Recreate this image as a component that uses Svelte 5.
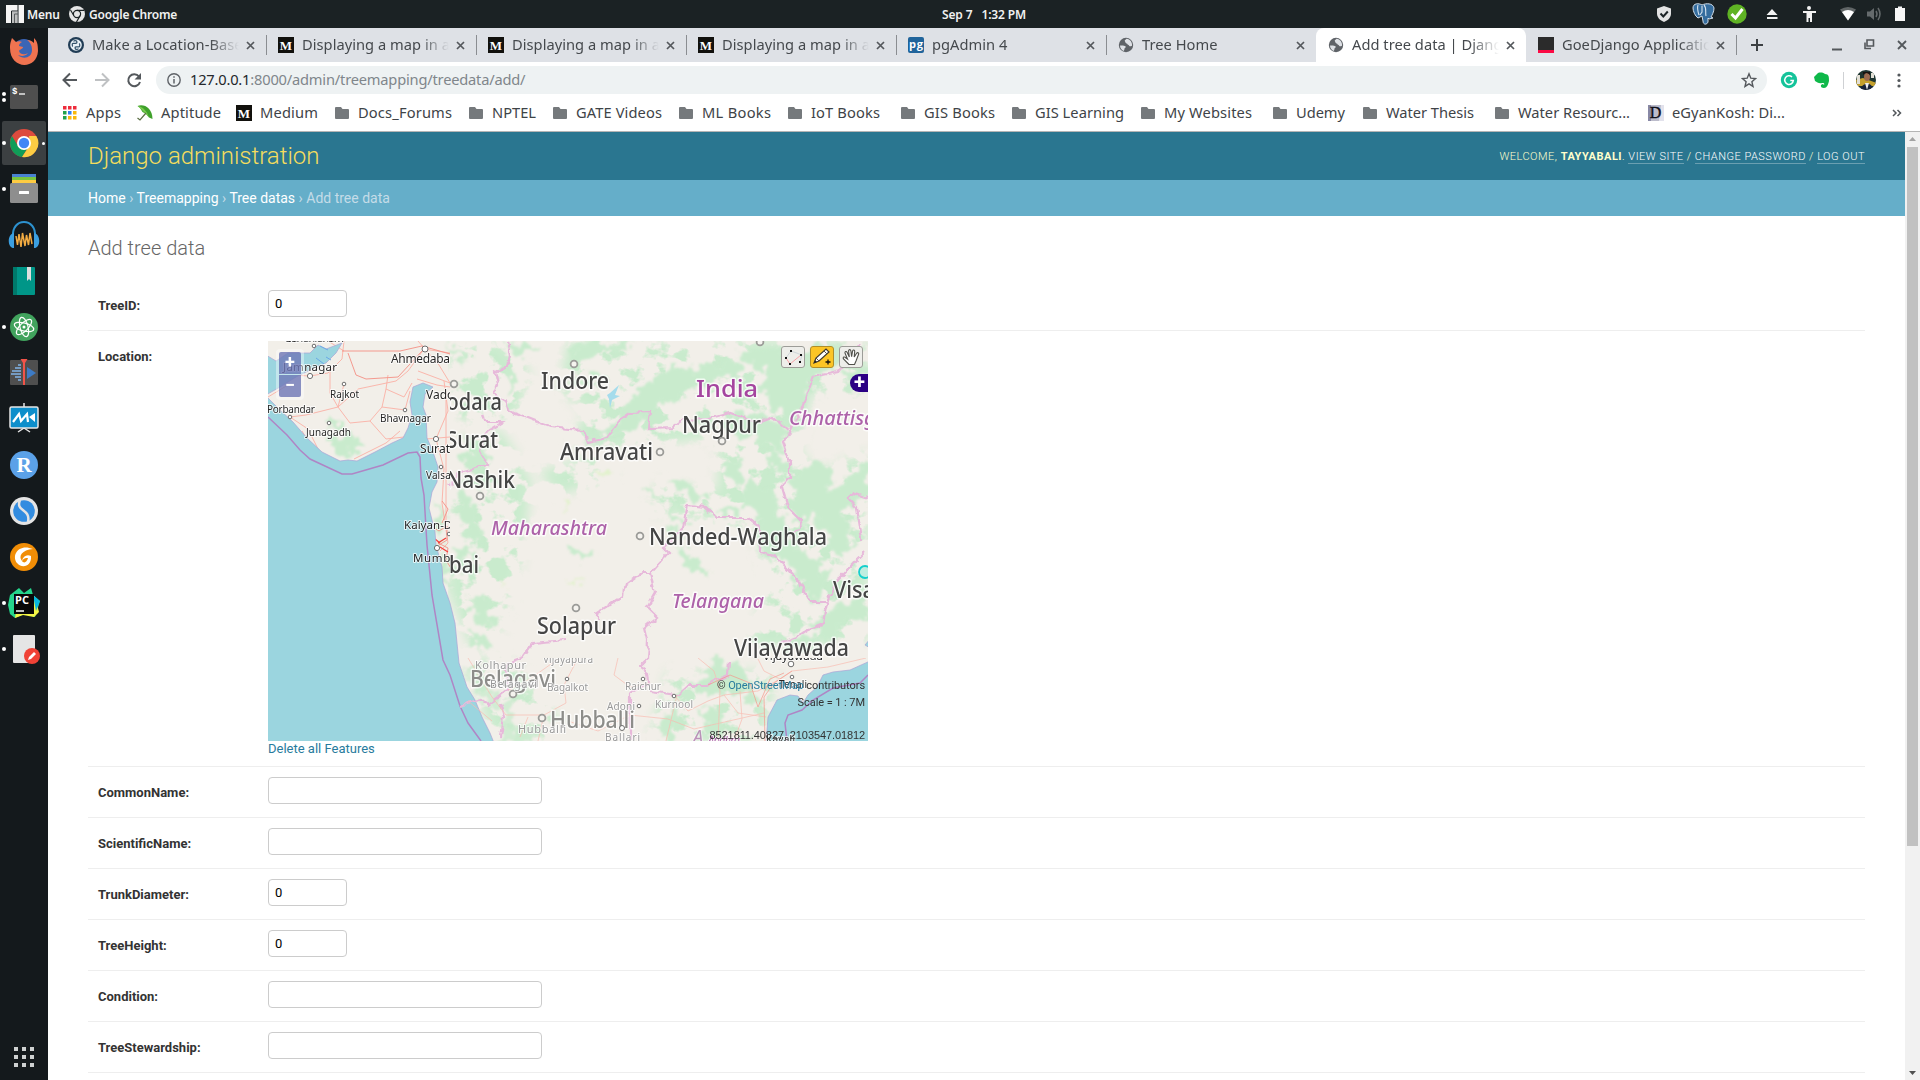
<script>
  const tabs = [
    { title: 'Make a Location-Based Web App', icon: 'python' },
    { title: 'Displaying a map in a Django', icon: 'medium' },
    { title: 'Displaying a map in a Django', icon: 'medium' },
    { title: 'Displaying a map in a Django', icon: 'medium' },
    { title: 'pgAdmin 4', icon: 'pg' },
    { title: 'Tree Home', icon: 'globe' },
    { title: 'Add tree data | Django site', icon: 'globe', active: true },
    { title: 'GoeDjango Application', icon: 'goe' }
  ];

  const bookmarks = [
    { label: 'Apps', icon: 'apps', w: 75, t: 35 },
    { label: 'Aptitude', icon: 'umbrella', w: 99, t: 60 },
    { label: 'Medium', icon: 'medium', w: 99, t: 58 },
    { label: 'Docs_Forums', icon: 'folder', w: 134, t: 94 },
    { label: 'NPTEL', icon: 'folder', w: 84, t: 44 },
    { label: 'GATE Videos', icon: 'folder', w: 126, t: 86 },
    { label: 'ML Books', icon: 'folder', w: 109, t: 69 },
    { label: 'IoT Books', icon: 'folder', w: 113, t: 69 },
    { label: 'GIS Books', icon: 'folder', w: 111, t: 71 },
    { label: 'GIS Learning', icon: 'folder', w: 129, t: 89 },
    { label: 'My Websites', icon: 'folder', w: 132, t: 88 },
    { label: 'Udemy', icon: 'folder', w: 90, t: 49 },
    { label: 'Water Thesis', icon: 'folder', w: 132, t: 88 },
    { label: 'Water Resourc...', icon: 'folder', w: 153, t: 112 },
    { label: 'eGyanKosh: Di...', icon: 'egyan', w: 140, t: 113 }
  ];

  const dock = [
    { id: 'firefox' },
    { id: 'terminal', dots: 2 },
    { id: 'chrome', dots: 1, active: true },
    { id: 'files', dots: 1 },
    { id: 'audacity' },
    { id: 'book' },
    { id: 'atom', dots: 1 },
    { id: 'cutter' },
    { id: 'board' },
    { id: 'rstudio' },
    { id: 'simplenote' },
    { id: 'foxit' },
    { id: 'pycharm', dots: 1 },
    { id: 'editor', dots: 1 }
  ];

  const fields = [
    { label: 'CommonName:', value: '' },
    { label: 'ScientificName:', value: '' },
    { label: 'TrunkDiameter:', value: '0', small: true },
    { label: 'TreeHeight:', value: '0', small: true },
    { label: 'Condition:', value: '' },
    { label: 'TreeStewardship:', value: '' }
  ];

  // Labels of the sharp tile: text, x, baseline, size, text length
  const sharp = [
    ['Gandhidham', 16, 1, 11, 60], ['Ahmedabad', 123, 22, 12, 66], ['Jamnagar', 15, 30, 11.5, 54],
    ['Rajkot', 62, 57, 10, 29], ['Vadodara', 158, 58, 12, 54], ['Porbandar', -1, 72, 10, 48],
    ['Bhavnagar', 112, 81, 10, 51], ['Junagadh', 38, 95, 10, 45], ['Surat', 152, 112, 12, 30],
    ['Valsad', 158, 138, 10, 31], ['Kalyan-Dombivli', 136, 188, 11.5, 88], ['Mumbai', 145, 221, 11.5, 48]
  ];
  // Labels of the enlarged tile
  const large = [
    ['Vadodara', 143, 69, 23, 91], ['Surat', 178, 107, 23, 52], ['Nashik', 178, 147, 23, 69],
    ['Indore', 273, 48, 23, 68], ['Nagpur', 414, 92, 23, 79], ['Amravati', 292, 119, 23, 93],
    ['Nanded-Waghala', 381, 204, 23, 178], ['Mumbai', 130, 232, 23, 81], ['Solapur', 269, 293, 23, 79],
    ['Visakhapatnam', 565, 257, 23, 160], ['Vijayawada', 466, 315, 23, 115]
  ];
  const faded = [
    ['Kolhapur', 207, 328, 11, 51], ['Vijayapura', 275, 322, 10, 50], ['Belagavi', 222, 347, 10.5, 47],
    ['Bagalkot', 279, 350, 10, 41], ['Raichur', 357, 349, 10, 36], ['Adoni', 339, 369, 10, 28],
    ['Kurnool', 387, 367, 10, 38], ['Hubballi', 250, 392, 11, 48], ['Ballari', 337, 400, 10, 35]
  ];
  const smallTowns = [[46, 5], [157, 8, 3], [42, 35, 2.6], [76, 43], [22, 76], [137, 69], [61, 82], [168, 98, 2.6], [173, 126], [169, 207, 2.6], [181, 193]];
  const bigTowns = [[186, 43], [212, 155], [306, 23], [392, 111], [454, 100], [372, 195], [308, 267], [492, 1], [245, 353], [274, 377]];
</script>

{#snippet fav(id)}
  {#if id === 'folder'}
    <svg class="fav folder" viewBox="0 0 14 14"><path d="M1 1h5l1.500 2H13a1 1 0 0 1 1 1v8a1 1 0 0 1-1 1H1a1 1 0 0 1-1-1V2a1 1 0 0 1 1-1z" fill="#75797c" /></svg>
  {:else}
    <svg class="fav" viewBox="0 0 16 16">
      {#if id === 'medium' || id === 'egyan'}
        <rect width="16" height="16" fill={id === 'medium' ? '#12110d' : '#bcbccb'} />
        {#if id === 'medium'}
          <text x="8" y="12.500" font-family="Liberation Serif" font-weight="bold" font-size="13" text-anchor="middle" fill="#fff">M</text>
        {:else}
          <path d="M0 0h3v16H0z" fill="#8888a6" /><path d="M13 0h3v16h-5z" fill="#e2e2ec" />
          <text x="7.500" y="13" font-family="Liberation Serif" font-size="16" text-anchor="middle" fill="#0d0d18" stroke="#0d0d18" stroke-width=".4">D</text>
        {/if}
      {:else if id === 'python'}
        <circle cx="8" cy="8" r="8" fill="#203c55" /><circle cx="8" cy="8" r="5.800" fill="#e9f2f7" />
        <path d="M5 6.300h3.700M5 6.300C4 6.300 4 9.200 5 9.400M8.800 6.200V4.600c0-1.200-3-1.200-3 0M11 9.800H7.300M11 9.800c1 0 1-3 0-3.300M7.200 9.800v1.600c0 1.200 3 1.200 3 0" fill="none" stroke="#35556d" stroke-width="1.300" />
      {:else if id === 'pg'}
        <rect width="16" height="16" rx="2" fill="#20649b" />
        <text x="8" y="11" font-family="Open Sans" font-weight="bold" font-size="11" text-anchor="middle" textLength="14" fill="#fff">pg</text>
      {:else if id === 'globe'}
        <circle cx="8" cy="8" r="7.200" fill="#5f6368" />
        <path d="M2 8.600c2 0 4.200-.3 5.700 1 .5 1-1.200 1.300-1.200 2.200 0 .9-.4 1.400-.9 2.200C3.400 12.800 2 11 2 8.600zM8.600 1.800c-1 1-2.400 1.200-1.700 2.500.8 1 .3 1.700 1.600 2.100 1.300.2.700 1.400 2.200 1.600.6 1.700 1.700 1.500 3.300.7.500-3.200-1.900-6.600-5.400-6.900z" fill="#dee1e6" />
      {:else if id === 'goe'}
        <rect width="16" height="16" fill="#2b2b2b" /><rect y="13" width="16" height="3" fill="#fb0a44" />
      {:else if id === 'apps'}
        <g transform="translate(1 1)">
          <path d="M0 0h3.500v3.500H0zM5 0h3.500v3.500H5zM10 0h3.500v3.500H10z" fill="#ee2c3c" />
          <path d="M0 5h3.500v3.500H0zM0 10h3.500v3.500H0z" fill="#1fa24c" /><path d="M5 5h3.500v3.500H5z" fill="#2f7ff0" />
          <path d="M10 5h3.500v3.500H10zM5 10h3.500v3.500H5zM10 10h3.500v3.500H10z" fill="#f9b90c" />
        </g>
      {:else if id === 'umbrella'}
        <path d="M.5 1C7-1.500 15.500 3 15.500 14l-3.500-1.500-3-3.500-3.500-2-2.500-4z" fill="#3fa12b" />
        <path d="M1 1c5 1 9 5 11 11.500L9 9z" fill="#78cb4e" /><path d="M9 8 3 15 .5 13" fill="none" stroke="#5a6d42" stroke-width="1.200" />
      {/if}
    </svg>
  {/if}
{/snippet}

{#snippet dockIcon(id)}
  <svg class="app" viewBox="0 0 32 32">
    {#if id === 'firefox'}
      <circle cx="16" cy="16" r="12" fill="#3b65b5" />
      <path d="M2 13C2 8 3 6 4 3l4 4c2-1 4-1 6 0-2 1-3 2-3 4l4 1c0 2-3 2-4 4 1 4 6 4 9 2-3 4-8 3-10 2 5 5 14 3 14-5 0-5-2-8-5-10 3 0 5 1 7 3l0-5c3 3 4 6 4 13-1 19-28 19-28-3z" fill="#ef7350" />
    {:else if id === 'terminal'}
      <rect x="2" y="4" width="28" height="24" rx="1.500" fill="#4f4f4f" />
      <text x="4" y="13" font-family="Liberation Mono" font-weight="bold" font-size="9" fill="#fff">$</text><path d="M11 13h6" stroke="#fff" stroke-width="1.300" />
    {:else if id === 'chrome'}
      <circle cx="16" cy="16" r="14" fill="#dd4b3e" />
      <path d="M4 9a14 14 0 0 0 10 21l7-11-5 3-6-3z" fill="#109d58" /><path d="M28.300 9A14 14 0 0 1 14 30l8-12-1-9z" fill="#fdcc43" />
      <circle cx="16" cy="16" r="7" fill="#fff" /><circle cx="16" cy="16" r="5.200" fill="#4086f5" />
    {:else if id === 'files'}
      <path d="M4 1h24v10H4z" fill="#4981d1" /><path d="M4 4h24v8H4z" fill="#7ac53f" /><path d="M4 7h24v8H4z" fill="#fecb42" />
      <rect x="2" y="10" width="28" height="20" rx="1.500" fill="#8e8e8e" /><rect x="11" y="18" width="10" height="3" rx=".5" fill="#fff" />
    {:else if id === 'audacity'}
      <path d="M5 18C3-2 29-2 27 18" fill="none" stroke="#2d92d0" stroke-width="2" />
      <path d="M6 14v15c-7 0-7-14 0-15zM26 14v15c7 0 7-14 0-15z" fill="#3c9fe0" />
      <path d="m8 17 1.500 9L11 15l2 13 1.500-14L17 27l1.500-11 2 10 1.500-12 2 11" fill="none" stroke="#f2ab42" stroke-width="1.500" />
    {:else if id === 'book'}
      <rect x="5" y="2" width="22" height="28" rx="1" fill="#009688" /><path d="M5 2h4v28H5z" fill="#00796b" /><path d="M19 2h4v14l-2-2-2 2z" fill="#dfdfdf" />
    {:else if id === 'atom'}
      <circle cx="16" cy="16" r="14" fill="#41a35d" />
      <g fill="none" stroke="#fff" stroke-width="1.200"><ellipse cx="16" cy="16" rx="10" ry="4" transform="rotate(15 16 16)" /><ellipse cx="16" cy="16" rx="10" ry="4" transform="rotate(75 16 16)" /><ellipse cx="16" cy="16" rx="10" ry="4" transform="rotate(135 16 16)" /></g><circle cx="16" cy="16" r="1.500" fill="#fff" />
    {:else if id === 'cutter'}
      <rect x="2" y="3" width="28" height="25" rx="1" fill="#4f4f4f" />
      <path d="M10 8h3M7 11h6M4 14h9M3 17h10M7 20h6M10 23h3" stroke="#82b4e7" stroke-width="1.600" /><path d="m19 10 9 6-9 6z" fill="#3d7bc5" />
      <path d="M12.500 2h7l-2.500 4v22h-2V6z" fill="#f15449" />
    {:else if id === 'board'}
      <path d="M16 0v4M16 25l-6 4M16 25l6 4" stroke="#e6e6e6" stroke-width="1.500" />
      <rect x="2" y="4" width="28" height="21" rx="1.500" fill="#0d8ecb" stroke="#e6e6e6" stroke-width="1.500" />
      <path d="m5 19 6-8 2 7 6-7 1 8" fill="none" stroke="#fff" stroke-width="2.200" /><path d="m21 14 6-4v9z" fill="#fff" />
    {:else if id === 'rstudio'}
      <circle cx="16" cy="16" r="14" fill="#5ba1e8" /><text x="16" y="23" font-family="Liberation Serif" font-size="21" font-weight="bold" text-anchor="middle" fill="#fff">R</text>
    {:else if id === 'simplenote'}
      <circle cx="16" cy="16" r="14" fill="#e4e4e4" /><circle cx="16" cy="16" r="10.800" fill="#328ce0" />
      <path d="M12 5c-5 12 11 8 8 22" fill="none" stroke="#e4e4e4" stroke-width="2.500" />
    {:else if id === 'foxit'}
      <circle cx="16" cy="16" r="14" fill="#f18d06" /><path d="M25 8C11 2 3 14 9 22c6 7 15 2 14-7-4-2-8 0-9 5-4-5 0-11 11-12z" fill="#fff" />
      <path d="M14 20c2 3 5 1 6-3-3 0-4 0-6 3z" fill="#f18d06" />
    {:else if id === 'pycharm'}
      <path d="m2 8 9-7 5 5 7-5 2 7 7 6-5 16-11-3-9 4-5-4-2-9z" fill="#25d58c" /><path d="m8 25 16-18 3 3 4 15-5 5-11-2-8 3z" fill="#f5f645" /><path d="m25 8 7 6-4 10z" fill="#08b9e0" />
      <rect x="6" y="7" width="20" height="20" fill="#080808" /><text x="7" y="17" font-family="Open Sans" font-weight="bold" font-size="11" fill="#fff">PC</text><path d="M8 24h8" stroke="#fff" stroke-width="1.500" />
    {:else if id === 'editor'}
      <rect x="5" y="2" width="22" height="28" rx="1" fill="#e5e5e5" /><circle cx="24" cy="23" r="8" fill="#f04236" /><path d="m20 27 1-3 5-5 2 2-5 5z" fill="#fff" />
    {/if}
  </svg>
{/snippet}

<div class="desktop">
  <header class="panel">
    <div class="panel-left">
      <svg width="18" height="18" viewBox="0 0 18 18"><path d="M0 0h18v18H0z" fill="#f5f5f5" /><path d="M5.500 18V6H12M12 0v18M8.500 18V9H12" fill="none" stroke="#1b2224" stroke-width="1" /><path d="M6 6h6v12H6z" fill="#8c8f90" opacity=".55" /></svg>
      <span class="menu">Menu</span>
      <svg class="chrome-mono" width="16" height="16" viewBox="0 0 16 16"><circle cx="8" cy="8" r="8" fill="#e6e6e6" /><circle cx="8" cy="8" r="3.600" fill="none" stroke="#1b2224" stroke-width="1.200" /><path d="M8 4.400h7M4.800 9.500 1.500 4M11.200 9.500 7.500 16" stroke="#1b2224" stroke-width="1.200" /></svg>
      <span class="appname">Google Chrome</span>
    </div>
    <div class="clock"><span>Sep 7</span><span>1:32 PM</span></div>
    <svg class="tray" width="270" height="28" viewBox="1650 0 270 28">
      <path d="m1664 6 7 2.500v5c0 4-3 7-7 8.500-4-1.500-7-4.500-7-8.500v-5z" fill="#e3e3e3" /><path d="m1660.500 13.500 2.800 3 4.500-5" fill="none" stroke="#1b2224" stroke-width="2" />
      <path d="M1693 8c0-5 6-5 9-3 4-2 11-2 12 3 0 4-2 7-3 9l2 1-4 1-1-1v4c-1 3-5 3-5-1l-1-5-4 2c-3-2-5-7-5-10z" fill="#356d9e" stroke="#d1dde8" />
      <path d="M1698 5c-1 3 0 7 1 10M1704 5c3 3 1 7 2 11M1700 15l2-3v-6" fill="none" stroke="#d6e3ef" stroke-width="1.100" />
      <circle cx="1737" cy="14" r="9.700" fill="#5fb324" /><path d="m1731.500 14 4 4 7-9" fill="none" stroke="#fff" stroke-width="3" />
      <path d="m1772 9 5.500 6h-11zM1767 17h10.500v2H1767z" fill="#f2f2f2" />
      <circle cx="1809" cy="8" r="2" fill="#f2f2f2" /><path d="M1803 11h13v2h-4v9h-2v-4h-1.500v4h-2v-9h-3.500z" fill="#f2f2f2" />
      <path d="M1840 9.500q8-5 16 0l-8 11z" fill="#606566" /><path d="M1842 12q6-4 12 0l-6 8.500z" fill="#fff" />
      <path d="M1867 11.500h3l4-3.500v12l-4-3.500h-3z" fill="#656a6c" /><path d="M1876 11q2 3 0 6M1878 8q4 6 0 12" fill="none" stroke="#656a6c" stroke-width="1.500" />
      <path d="M1895 8h3V6.500h4V8h3v13h-10z" fill="#f7f7f7" />
    </svg>
  </header>

  <div class="body">
    <nav class="dock">
      {#each dock as item}
        <div class="slot" class:active={item.active}>
          <span class="dots">{#each Array(item.dots ?? 0) as _}<i></i>{/each}</span>
          {@render dockIcon(item.id)}
          {#if item.active}<b class="more"></b>{/if}
        </div>
      {/each}
      <div class="grid">{#each Array(9) as _}<i></i>{/each}</div>
    </nav>

    <main class="window">
      <div class="tabstrip">
        {#each tabs as tab, i}
          <div class="tab" class:active={tab.active} class:nosep={i === 5 || i === 6}>
            {@render fav(tab.icon)}
            <span class="title">{tab.title}</span>
            <svg class="close" width="9" height="9" viewBox="0 0 9 9"><path d="m1 1 7 7M8 1 1 8" stroke="#54585c" stroke-width="1.700" /></svg>
          </div>
        {/each}
        <svg class="plus" width="12" height="12" viewBox="0 0 12 12"><path d="M6 0v12M0 6h12" stroke="#3c4043" stroke-width="2" /></svg>
        <svg class="winctl" width="76" height="14" viewBox="0 0 76 14">
          <path d="M0 11.500h10" stroke="#54585c" stroke-width="2" />
          <path d="M35 2h6.500v6H35zM33 4.500v6h6" fill="none" stroke="#54585c" stroke-width="1.600" />
          <path d="m66 3 8 8M74 3l-8 8" stroke="#54585c" stroke-width="1.800" />
        </svg>
      </div>

      <div class="toolbar">
        <svg class="navs" width="80" height="16" viewBox="0 0 80 16" fill="none" stroke-width="2">
          <path d="M15 8H2M8 1.500 1.500 8 8 14.500" stroke="#54585c" /><path d="M33 8h13M40 1.500 46.500 8 40 14.500" stroke="#bfc1c3" />
          <path d="M77 4.500A6 6 0 1 0 78 10" stroke="#54585c" /><path d="M79 1v6.500h-6.500z" fill="#54585c" stroke="none" />
        </svg>
        <div class="omnibox">
          <svg width="14" height="14" viewBox="0 0 14 14"><circle cx="7" cy="7" r="6.200" fill="none" stroke="#5f6368" stroke-width="1.400" /><path d="M7 6v4.500M7 3.200v1.600" stroke="#5f6368" stroke-width="1.500" /></svg>
          <span class="url"><em>127.0.0.1</em>:8000/admin/treemapping/treedata/add/</span>
          <svg class="star" width="16" height="16" viewBox="0 0 16 16"><path d="m8 1.800 1.800 4.400 4.700.4-3.600 3.100 1.100 4.700L8 11.900l-4 2.500 1.100-4.700-3.600-3.100 4.700-.4z" fill="none" stroke="#54585c" stroke-width="1.400" /></svg>
        </div>
        <svg class="ext" width="130" height="24" viewBox="1780 68 130 24">
          <circle cx="1789" cy="80" r="8.200" fill="#15c39a" /><path d="M1792 77a4.300 4.300 0 1 0 1.300 3.600h-3" fill="none" stroke="#fff" stroke-width="1.500" />
          <path d="M1814 77l4-4c3-1 6 0 7 1 4 0 4 3 4 7-1 4-2 7-5 7-4 0-4-4-1-4l1 1c1-2-1-2-2-2-3 1-5-1-7-2z" fill="#0fb84a" />
          <path d="M1843.500 72v17" stroke="#cfd1d4" />
          <clipPath id="av"><circle cx="1866" cy="80" r="10" /></clipPath>
          <g clip-path="url(#av)"><path d="M1855 68h22v24h-22z" fill="#1d3430" /><path d="m1855 80 8-2 14 5v3h-22z" fill="#c5a12e" /><path d="M1857 75h3v9h-3zM1871 73h3v5h-3z" fill="#e2dfd5" /><ellipse cx="1867" cy="77" rx="3" ry="4" fill="#9b6b50" /><path d="M1863 75q3-4 7 0v-3h-7z" fill="#19120f" /><path d="M1860 92c0-10 13-12 14 0z" fill="#18233a" /><path d="m1865 83 2 7 2-7z" fill="#eee" /></g>
          <g fill="#54585c"><circle cx="1899" cy="75" r="1.600" /><circle cx="1899" cy="80.500" r="1.600" /><circle cx="1899" cy="86" r="1.600" /></g>
        </svg>
      </div>

      <div class="bookmarks">
        {#each bookmarks as b}
          <div class="bm" style:width="{b.w}px">{@render fav(b.icon)}<svg class="bmlabel" width={b.t + 2} height="24"><text x="0" y="17.300" textLength={b.t}>{b.label}</text></svg></div>
        {/each}
        <svg class="chev" width="10" height="8" viewBox="0 0 10 8"><path d="m1 1 3 3-3 3M5.500 1l3 3-3 3" fill="none" stroke="#54585c" stroke-width="1.500" /></svg>
      </div>

      <div class="viewport">
        <div class="page">
          <div class="branding">
            <h1>Django administration</h1>
            <div class="usertools">Welcome, <strong>tayyabali</strong>. <span>View site</span> / <span>Change password</span> / <span>Log out</span></div>
          </div>
          <div class="crumbs"><b>Home</b> › <b>Treemapping</b> › <b>Tree datas</b> › Add tree data</div>
          <div class="content">
            <h2>Add tree data</h2>
            <div class="row"><span class="label">TreeID:</span><input class="small" aria-label="TreeID" value="0" /></div>
            <div class="row maprow">
              <span class="label">Location:</span>
              <div>
                <div class="map">
                  <svg width="600" height="400" viewBox="0 0 600 400">
                    <defs>
                      <filter id="rough" x="-5%" y="-5%" width="110%" height="110%"><feTurbulence type="fractalNoise" baseFrequency=".09" numOctaves="3" seed="7" /><feDisplacementMap in="SourceGraphic" scale="26" xChannelSelector="R" yChannelSelector="G" /><feGaussianBlur stdDeviation=".8" /></filter>
                      <filter id="speckle" x="0" y="0" width="100%" height="100%" color-interpolation-filters="sRGB"><feTurbulence type="fractalNoise" baseFrequency=".045 .055" numOctaves="4" seed="12" result="n" /><feColorMatrix in="n" values="0 0 0 0 .788  0 0 0 0 .922  0 0 0 0 .804  9 0 0 0 -4.700" result="g" /><feGaussianBlur in="SourceAlpha" stdDeviation="6" result="m" /><feComposite in="g" in2="m" operator="in" /><feGaussianBlur stdDeviation=".7" /></filter>
                      <filter id="jag" x="-5%" y="-5%" width="110%" height="110%"><feTurbulence type="fractalNoise" baseFrequency=".12" numOctaves="2" seed="3" /><feDisplacementMap in="SourceGraphic" scale="7" xChannelSelector="R" yChannelSelector="G" /><feGaussianBlur stdDeviation=".5" /></filter>
                      <filter id="soft"><feGaussianBlur stdDeviation=".7" /></filter>
                      <clipPath id="leftTile"><path d="M0 0h182v317H0z" /></clipPath>
                      <clipPath id="rightTile"><path d="M182 0h418v317H182z" /></clipPath>
                      <clipPath id="lowTile"><path d="M182 317h418v83H182z" /></clipPath>
                    </defs>
                    <rect width="600" height="400" fill="#f2efe9" />

                    <!-- vegetation -->
                    <path filter="url(#speckle)" d="M300 0H600V60L545 50 530 110 552 130 600 110V300L480 310 500 240 484 190 440 180 380 170 390 140 450 150 450 96 340 110 300 100 320 70 290 50zM182 0h50l30 30-10 40-40 20-28-20zM184 100l50-10 30 50-10 80-20 70-30 20-24-60zM196 318h50l60 82H226zM400 330h110l-16 70H380zM270 130l60-16 20 24-60 16z" />
                    <g filter="url(#rough)" fill="#c9ebcd">
                      <path d="M354 66 375 44 398 30 440 22 468 20 474 32 445 42 420 52 396 62 380 70 378 88 352 93 322 98 340 86z" />
                      <path d="M468 14 500 2 520 12 545 6 578 2 570 24 548 34 540 52 534 74 518 84 506 62 490 44 500 28 484 26z" />
                      <path d="M574 32 600 24V52L580 40zM300 12l18-8 30-4-20 16-18 8zM338 0h30l-18 12zM302 40l22-8 10 6-18 8z" />
                      <path d="M460 78 492 72 514 84 518 104 512 114 484 98 464 92zM455 118l20 6-4 22-14-12zM480 138l24 12 8 26 12 26-18 10-14-20-8-20-12-12zM498 112l22 6 0 14-20-6z" />
                      <path d="M524 140 548 118 560 130 566 150 582 138 600 116V164L588 160 576 172 586 204 570 216 552 182 542 170 532 186 524 168z" />
                      <path d="M400 140 426 142 438 158 418 156zM376 148 390 158 382 160zM446 170l28-6-8 10-18 2zM404 158l8 20 10 4-6 4-12-12z" />
                      <path d="M494 200 516 196 540 214 556 222 560 244 546 260 536 248 526 232 512 218 498 216z" />
                      <path d="M558 270 600 252V284L578 280 560 300 544 288zM530 292l20 6-14 14-20-6z" />
                      <path d="M408 206 432 222 444 232 420 226zM304 206l26 8-10 4-18-6zM396 186l18 6-14 8z" />
                      <path d="M198 110 214 106 220 122 212 132 196 124zM206 136l20 8-14 6zM190 148l18 14-4 22-14-10zM200 176l14 12-4 18-12-8zM184 202l22 6-8 14 12 8-16 0zM200 252l18 6 8 20-8 12-12-10zM200 288l20 14-10 8z" />
                      <path d="M182 4 202 16 194 24zM190 58l14 8-10 8zM236 2l24-2 8 8-16 6zM242 22l10 26-10 6z" />
                      <path d="M60 96 84 92 96 104 84 116 66 108zM63 80l9-2 3 6-10 3zM168 158l8 22-3 22-6-22zM176 210l9 18-4 22-6-22z" />
                      <path d="M192 326 210 340 224 352 240 362 248 384 270 392 260 400 234 400 236 374 220 360z" opacity=".8" />
                      <path d="M420 342 448 322 470 320 484 344 462 358 450 352 434 354zM432 362l20 6 6 32-22-4 4-18zM400 368l12 6-12 26-10 0zM470 346l20 4-6 14z" />
                    </g>
                    <path filter="url(#rough)" d="M330 128h14l-4 8-12 2zM290 160l8-4v12zM300 240h14l-8 6zM232 240h10l-4 4z" fill="#e2f2cd" />

                    <!-- minor roads of the sharp tile -->
                    <g clip-path="url(#leftTile)" fill="none" stroke="#fbb0a5" stroke-width=".9">
                      <path d="M0 26 22 34 42 35 60 32 74 18 76 0M62 30V52L70 66 38 74 22 76 40 88 52 112M76 43 70 66 82 82 102 80 114 66 118 48 120 34M70 66 90 48 128 40 140 30 156 8 182 12M102 80 118 98 136 96M114 66 137 69 142 50M149 38l20 6 13 2M150 30l32 12M157 8l14 16 11 18M157 8 150 0M168 98 180 70 176 40M158 98l24-2M168 98l8 30-2 34 6 40-8 8M86 118l32-16 14-12M34 90l16 26 28 6M0 56l20-12M60 0l16 10M118 48l18 8 8-14M178 50v130" />
                      <path d="M74 10h58l22-5 28 8M80 12l8 22 10 4 32-2 24-26M163 185l8 5 8-5v14l-8 5M170 202l10 5-2 12 6 10M174 160l6 8-6 14" stroke="#f49084" />
                      <path d="M167 198l5 4M170 202l8-5M172 206l8 5" stroke="#f2443f" stroke-width="1.400" />
                    </g>

                    <!-- sea -->
                    <g fill="#9bd5df" stroke="#aaa3d6" stroke-width=".7">
                      <path d="M-2 14 8 20 20 12 42 12 50 4 58 8 74 2 68 12 58 22 44 28 28 36 12 46 -2 54z" />
                      <path d="M-2 55 12 69 25 81 39 97 54 111 72 120 80 119 89 120 107 111 124 102 135 97 140 87 144 74 142 61 145 46 155 42 165 46 157 53 155 66 158 74 159 97 165 111 170 126 169 141 164 151 161 167 167 191 168 204 174 226 175 242 182 262 187 282 191 322 199 346 207 359 214 376 222 392 226 402H-2z" />
                      <path d="M602 320 582 329 565 331 555 334 549 346 540 354 535 362 530 355 522 354 509 359 500 376 498 402H602zM602 298l-5 6 5 3z" />
                    </g>
                    <path d="m52 5 8 4M58 16l5 3M48 17l8 6" fill="none" stroke="#69a9e8" />
                    <path d="M342 52l9-8-4 10 5 1-8 4-2 8-1-9-2-4z" fill="#a5dcec" />

                    <!-- maritime boundary -->
                    <g fill="none" stroke="#af85c5" stroke-width="1.500">
                      <path d="M0 76 19 94 32 109 42 118 74 133 84 133 115 124 140 112 149 111 152 116 153 137 156 154 159 204 164 254 175 319 182 334 192 365 200 382 213 400" />
                      <path d="M600 334 592 342 565 347 545 359 534 369 520 374 517 382 519 400" />
                    </g>

                    <!-- state borders -->
                    <g filter="url(#jag)" fill="none" stroke="#e7b9da" stroke-width="2.200">
                      <path d="M239 0 242 14 240 24 227 31 230 44 226 54 237 61 239 69 245 72 259 77 282 86 302 88 315 89 320 101 339 97 352 79 362 72 382 71 380 87 405 86 415 79 440 78 462 72 492 81 505 76 522 91 534 66 545 36 569 31 592 4" />
                      <path d="M214 72 216 81 235 81 219 91 212 111 219 124 192 131 182 144M522 91 515 101 522 121 522 137 514 146 520 167 534 181 525 195M594 199 589 167 580 157 585 152 600 157M597 211 572 236 559 261" />
                      <path d="M492 186 492 212 509 216 530 239 542 261 559 261 555 282 539 289 529 296 512 302M415 187 419 164 437 166 449 177 479 177 492 186M415 187 395 207 400 212 382 232 387 252 379 266 389 276 377 286 380 299 379 319 372 326 380 332 381 342 362 352 362 400M381 350 409 354 420 344 439 344 459 334 460 321M382 232 374 232 355 246 354 256 329 272 329 279M297 299 265 302 255 316 239 322 240 349 220 364 214 359 192 365M232 362 236 376 233 396" />
                    </g>

                    <!-- roads of the fading tile -->
                    <g clip-path="url(#lowTile)" fill="none" stroke="#f9bbb0" stroke-width=".8" opacity=".85">
                      <path d="M200 317 224 356 238 374 276 374 298 362 296 344 310 317M276 374 270 400M240 349 262 338 290 318M350 317 346 334 362 346 381 342M406 354 420 370 440 360 456 354 490 350 512 338 524 330 560 326 598 317M430 317 446 330 452 350 450 400M490 318 496 330 512 338M456 354 470 372 498 376M472 350 474 378 466 400M409 354 398 400M300 380 330 390 362 374 400 378 426 388 496 372M200 360l24 20M260 376l-8 20" />
                      <path d="M524 330 506 342 496 356 497 400M440 344l22-10 20 8 8 24 12-28 14-6" stroke="#f59589" />
                    </g>

                    <!-- place names -->
                    <g class="sharp" clip-path="url(#leftTile)">
                      {#each sharp as [t, x, y, s, w]}<text {x} {y} font-size={s} textLength={w}>{t}</text>{/each}
                      {#each smallTowns as [x, y, r = 1.8]}<circle cx={x} cy={y} {r} />{/each}
                    </g>
                    <g class="large" clip-path="url(#rightTile)"><g filter="url(#soft)">
                      {#each large as [t, x, y, s, w]}<text {x} {y} font-size={s} textLength={w} lengthAdjust="spacingAndGlyphs">{t}</text>{/each}
                      <g class="state">
                        <text class="country" x="428" y="56" font-size="24" textLength="62" lengthAdjust="spacingAndGlyphs">India</text>
                        <text x="223" y="194" font-size="20" textLength="116" lengthAdjust="spacingAndGlyphs">Maharashtra</text>
                        <text x="404" y="267" font-size="20" textLength="92" lengthAdjust="spacingAndGlyphs">Telangana</text>
                        <text x="521" y="84" font-size="20" textLength="118" lengthAdjust="spacingAndGlyphs">Chhattisgarh</text>
                      </g>
                    </g></g>
                    <g class="large faint" filter="url(#soft)">
                      <text x="202" y="346" font-size="23" textLength="86" lengthAdjust="spacingAndGlyphs">Belagavi</text>
                      <text x="282" y="387" font-size="23" textLength="85" lengthAdjust="spacingAndGlyphs">Hubballi</text>
                      {#each bigTowns as [x, y]}<circle cx={x} cy={y} r="3.400" />{/each}
                    </g>
                    <g class="fade" clip-path="url(#lowTile)">
                      {#each faded as [t, x, y, s, w]}<text {x} {y} font-size={s} textLength={w}>{t}</text>{/each}
                      <circle cx="299" cy="338" r="1.800" /><circle cx="375" cy="338" r="1.800" /><circle cx="371" cy="365" r="1.800" /><circle cx="406" cy="355" r="1.800" /><circle cx="354" cy="387" r="2.500" />
                    </g>
                    <g class="sharp" clip-path="url(#lowTile)">
                      <text x="495" y="318.500" font-size="11.500" textLength="60">Vijayawada</text>
                      <text x="511" y="347" font-size="10" textLength="28">Tenali</text><text x="498" y="402" font-size="10" textLength="29">Kavali</text>
                      <circle cx="523" cy="323" r="2.800" /><circle cx="524" cy="336" r="1.800" />
                    </g>
                    <g class="state"><text x="425" y="402" font-size="18" opacity=".65">A</text><text x="440" y="403" font-size="11" textLength="32">Andhra</text></g>
                    <circle cx="597" cy="231" r="6" fill="#bfeee0" stroke="#16d0cc" stroke-width="1.800" />
                  </svg>
                  <div class="zoomer"><span class="zin">+</span><span class="zout">−</span></div>
                  <div class="edit">
                    <span><svg width="22" height="20" viewBox="0 0 22 20"><path d="m4 11 5-7 11 4-2 7" fill="none" stroke="#cfd6da" /><path d="m4 11 4 6 11-9" fill="none" stroke="#f7a3a8" /><path d="M3 10h2v2H3zM8 3h2v2H8zM18 7h2v2h-2zM17 14h2v2h-2zM7 16h2v2H7z" fill="#111" /></svg></span>
                    <span class="on"><svg width="22" height="20" viewBox="0 0 22 20"><path d="m3 16 2-5L15 2l3 3L8 14z" fill="#fff" stroke="#40392d" stroke-width="1.200" /><path d="m3 16 1-3 2 2z" fill="#222" /><path d="m13 4 3 3M5 11l3 3" stroke="#5f5648" /><path d="M17 12.500v5M14.500 15h5" stroke="#111" stroke-width="1.300" /></svg></span>
                    <span><svg width="22" height="20" viewBox="0 0 22 20"><path d="M9 17.500 3.500 12c-1-2 .8-2.800 2.500-1L7.500 12 5 6c-.3-1.800 1.600-2 2.200-.4L9.300 10 8.600 4c0-1.800 2-1.800 2.300 0l.7 5.600L12.600 4c.5-1.600 2.300-1.200 2.100.4L14.200 10l2.400-3.700c1-1.300 2.600-.4 2 1L16 14l-1.500 3.500z" fill="#fff" stroke="#51514b" stroke-width="1.100" /></svg></span>
                  </div>
                  <div class="layers">+</div>
                  <div class="credit"><span>© <a href="#osm">OpenStreetMap</a> contributors</span><span>Scale = 1 : 7M</span></div>
                  <div class="coords">8521811.40827, 2103547.01812</div>
                </div>
                <div class="del">Delete all Features</div>
              </div>
            </div>
            {#each fields as f}
              <div class="row"><span class="label">{f.label}</span><input class:small={f.small} aria-label={f.label} value={f.value} /></div>
            {/each}
          </div>
        </div>
        <div class="scroll"><svg width="15" height="15" viewBox="0 0 15 15"><path d="m4 9 3.500-4L11 9z" fill="#a3a3a3" /></svg><div class="thumb"></div><svg width="15" height="15" viewBox="0 0 15 15"><path d="m4 6 3.500 4L11 6z" fill="#505050" /></svg></div>
      </div>
    </main>
  </div>
</div>

<style>
  :global(body) { margin: 0; background: #fff; overflow: hidden; }
  * { box-sizing: border-box; }
  .desktop { width: 1920px; height: 1080px; overflow: hidden; display: flex; flex-direction: column; font-family: 'Noto Sans', sans-serif; }
  svg { flex: none; display: block; }
  .panel { height: 28px; flex: none; background: #1b2224; color: #f1f1f1; display: grid; grid-template-columns: 1fr auto 1fr; align-items: center; font-size: 12px; font-weight: 600; }
  .panel-left { display: flex; align-items: center; padding-left: 6px; }
  .menu { margin-left: 3px; width: 42px; letter-spacing: -.2px; }
  .appname { margin-left: 4px; letter-spacing: -.2px; }
  .clock { display: flex; gap: 9px; padding-left: 48px; letter-spacing: -.15px; }
  .tray { justify-self: end; }
  .body { flex: 1; min-height: 0; display: flex; }
  .dock { width: 48px; flex: none; background: #14191c; display: flex; flex-direction: column; }
  .slot { height: 46px; flex: none; position: relative; display: flex; align-items: center; justify-content: center; }
  .slot.active { background: #3c4042; margin: 1px 2px; height: 44px; border-radius: 2px; }
  .app { width: 32px; height: 32px; }
  .dots { position: absolute; left: 2px; display: flex; flex-direction: column; gap: 2px; }
  .active .dots { left: 0; }
  .dots i { width: 4px; height: 4px; border-radius: 2px; background: #fff; }
  .more { position: absolute; right: 1px; width: 3px; height: 3px; border-radius: 2px; background: #fff; }
  .grid { margin: auto auto 13px; display: grid; grid-template-columns: repeat(3, 4px); gap: 4px; }
  .grid i { width: 4px; height: 4px; background: #cfd1d1; }
  .window { flex: 1; min-width: 0; display: flex; flex-direction: column; }
  .tabstrip { height: 34px; flex: none; background: #dee1e6; display: flex; align-items: center; padding-left: 8px; }
  .tab { width: 210px; height: 34px; flex: none; display: flex; align-items: center; padding-left: 12px; position: relative; }
  .tab::after { content: ''; position: absolute; right: -1px; top: 7px; width: 1px; height: 20px; background: #8a8d91; }
  .tab.nosep::after { display: none; }
  .tab.active { background: #fff; border-radius: 8px 8px 0 0; }
  .fav { width: 16px; height: 16px; }
  .fav.folder { width: 14px; height: 14px; }
  .title { margin-left: 8px; padding-bottom: 2px; width: 147px; overflow: hidden; white-space: nowrap; font-size: 14.667px; color: #45494d; letter-spacing: .03px; -webkit-mask-image: linear-gradient(90deg, #000 118px, transparent 147px); mask-image: linear-gradient(90deg, #000 118px, transparent 147px); }
  .close { margin-left: 7px; }
  .plus { margin-left: 15px; }
  .winctl { margin-left: 69px; }
  .toolbar { height: 36px; flex: none; background: #fff; display: flex; align-items: center; }
  .navs { margin-left: 14px; }
  .omnibox { margin-left: 14px; width: 1611px; height: 28px; border-radius: 14px; background: #eef2f3; display: flex; align-items: center; padding: 0 10px 0 11px; }
  .url { margin-left: 9px; flex: 1; padding-bottom: 2px; font-size: 14.667px; letter-spacing: -.2px; color: #80868b; }
  .url em { font-style: normal; color: #25282b; }
  .ext { margin-left: 13px; }
  .bookmarks { height: 33px; flex: none; display: flex; align-items: center; padding: 0 0 4px 14px; }
  .bm { flex: none; display: flex; align-items: center; gap: 8px; }
  .bm .folder { margin-right: 1px; }
  .bmlabel { font-size: 14.667px; fill: #3e4347; overflow: visible; }
  .chev { margin-left: auto; margin-right: 18px; }
  .viewport { flex: 1; min-height: 0; border-top: 1px solid #b5b5b5; display: flex; font-family: Roboto, 'Liberation Sans', sans-serif; }
  .page { flex: 1; min-width: 0; overflow: hidden; background: #fff; }
  .branding { height: 48px; background: #2a7690; padding: 0 40px; display: flex; align-items: center; justify-content: space-between; }
  h1 { margin: 0; font-weight: 300; font-size: 24px; color: #f5dd5d; line-height: 48px; }
  .usertools { font-size: 11px; font-weight: 300; letter-spacing: .5px; text-transform: uppercase; color: #ffffcc; padding-top: 1px; }
  .usertools strong { font-weight: 700; }
  .usertools span { color: #fff; border-bottom: 1px solid rgba(255, 255, 255, .3); }
  .crumbs { height: 36px; line-height: 37px; padding: 0 40px; background: #65aec9; color: #c4dce8; font-size: 14px; }
  .crumbs b { font-weight: 400; color: #fff; }
  .content { padding: 20px 40px; }
  h2 { margin: 0 0 20px; height: 24px; font-weight: 300; font-size: 20px; line-height: 24px; color: #666; }
  .row { height: 51px; padding: 10px; border-bottom: 1px solid #eee; display: flex; align-items: flex-start; font-size: 13px; color: #333; }
  .maprow { height: 436px; }
  .label { width: 170px; flex: none; padding-top: 4px; font-weight: 700; font-size: 13px; line-height: 23px; }
  input { width: 274px; height: 27px; padding: 5px 6px; border: 1px solid #ccc; border-radius: 4px; font: 13px/15px Roboto, sans-serif; color: #000; background: #fff; outline: none; }
  input.small { width: 79px; }
  .map { position: relative; width: 600px; height: 400px; overflow: hidden; }
  .del { color: #287b9d; font-size: 13px; line-height: 16px; }
  .map text { font-family: 'Noto Sans', sans-serif; paint-order: stroke; stroke: rgba(255, 255, 255, .75); stroke-width: 2px; stroke-linejoin: round; }
  .sharp text { fill: #262626; }
  .sharp circle, .fade circle { fill: #fff; stroke: #6c6c6c; stroke-width: 1px; }
  .large text { fill: #444; stroke-width: 3px; font-weight: 500; }
  .large circle { fill: #f5f3ef; stroke: #9b9b98; stroke-width: 1.8px; }
  .large.faint text { fill: #8d8d8a; }
  .fade text { fill: #999; }
  .state text, .large .state text { fill: #ad62a9; font-style: italic; }
  .large .state .country { fill: #a5449f; font-style: normal; }
  .zoomer { position: absolute; left: 8px; top: 8px; padding: 3px; width: 28px; height: 51px; background: rgba(255, 255, 255, .4); border-radius: 4px; display: flex; flex-direction: column; gap: 1px; }
  .zoomer span { height: 22px; background: rgba(84, 94, 170, .68); color: #fff; font-weight: 700; font-size: 18px; line-height: 20px; text-align: center; }
  .zin { border-radius: 2px 2px 0 0; }
  .zout { border-radius: 0 0 2px 2px; }
  .edit { position: absolute; left: 513px; top: 5px; display: flex; gap: 5px; }
  .edit span { width: 24px; height: 22px; border: 1px solid #9d9d98; border-radius: 3px; background: #eeeeea; }
  .edit .on { background: #fcc526; border-color: #b08e2a; }
  .layers { position: absolute; left: 582px; top: 33px; width: 20px; height: 18px; border-radius: 9px 0 0 9px; background: #2b0084; color: #fff; font-size: 20px; font-weight: 700; line-height: 17px; padding-left: 4px; }
  .credit { position: absolute; right: 3px; top: 336px; display: flex; flex-direction: column; align-items: flex-end; font-size: 11px; line-height: 17px; letter-spacing: -.07px; color: #333; }
  .credit a { color: #287b9d; text-decoration: none; }
  .coords { position: absolute; right: 3px; top: 387px; font: 11px/15px 'Liberation Sans', sans-serif; letter-spacing: -.1px; color: #333; }
  .scroll { width: 15px; flex: none; background: #f1f1f1; display: flex; flex-direction: column; align-items: center; }
  .thumb { width: 11px; height: 699px; background: #c1c1c1; margin-bottom: auto; }
</style>
